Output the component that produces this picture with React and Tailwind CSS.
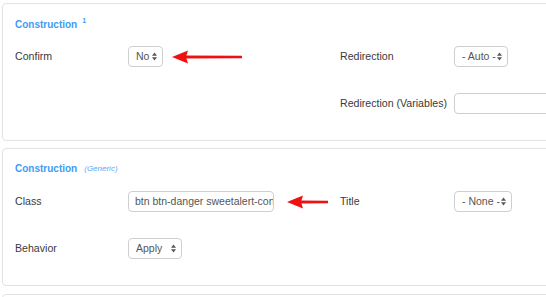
import React from 'react';

function UpDown() {
  return (
    <svg width="5" height="9" viewBox="0 0 5 9" className="shrink-0">
      <path d="M2.5 0.5 L5 3.7 L0 3.7 Z" fill="#555" />
      <path d="M2.5 8.5 L5 5.3 L0 5.3 Z" fill="#555" />
    </svg>
  );
}

function Select({ value, width }) {
  return (
    <div
      className={`h-[21px] flex items-center justify-between pl-[7px] pr-[5px] border border-[#cfcfcf] rounded-[4px] bg-white text-[10.5px] text-[#555] ${width}`}
    >
      <span>{value}</span>
      <UpDown />
    </div>
  );
}

function RedArrow({ length }) {
  return (
    <svg width={length} height="14" viewBox={`0 0 ${length} 14`} className="shrink-0">
      <path d="M0 7 L16 0.5 L14 7 L16 13.5 Z" fill="#ee1111" />
      <path d={`M13 5.4 L${length} 5.8 L${length} 8.2 L13 8.6 Z`} fill="#ee1111" />
    </svg>
  );
}

function Label({ children }) {
  return <div className="text-[10.6px] text-[#3a3a3a]">{children}</div>;
}

export default function App() {
  return (
    <div
      className="w-[546px] h-[297px] overflow-hidden bg-white"
      style={{ fontFamily: '"Liberation Sans", Arial, sans-serif' }}
    >
      <div className="w-[700px] pl-[2px] pt-[3px]">
        <div className="h-[138px] border border-[#e2e2e2] rounded-[4px] pl-[12px] pt-[14px]">
          <div className="h-[13px] flex items-start text-[10px] leading-[13px] font-bold text-[#3e9cf4]">
            Construction
            <span className="ml-[5px] text-[7px] leading-[8px] -mt-[1px]">1</span>
          </div>
          <div className="mt-[15px] grid grid-cols-[113px_212px_114px_1fr] gap-y-[26px] items-center">
            <Label>Confirm</Label>
            <div className="flex items-center">
              <Select value="No" width="w-[35px]" />
              <div className="ml-[9px]">
                <RedArrow length={70} />
              </div>
            </div>
            <Label>Redirection</Label>
            <Select value="- Auto -" width="w-[54px]" />

            <div />
            <div />
            <Label>Redirection (Variables)</Label>
            <div className="h-[21px] w-[160px] border border-[#cfcfcf] rounded-[4px] bg-white" />
          </div>
        </div>

        <div className="mt-[7px] h-[138px] border border-[#e2e2e2] rounded-[4px] pl-[12px] pt-[13px]">
          <div className="h-[13px] flex items-center text-[10px] leading-[13px] font-bold text-[#3e9cf4]">
            Construction
            <span className="ml-[7px] text-[8px] font-normal italic text-[#5aaaf5]">(Generic)</span>
          </div>
          <div className="mt-[16px] grid grid-cols-[113px_212px_114px_1fr] gap-y-[26px] items-center">
            <Label>Class</Label>
            <div className="flex items-center">
              <div className="h-[21px] w-[146px] overflow-hidden whitespace-nowrap flex items-center pl-[6px] border border-[#cfcfcf] rounded-[4px] bg-white text-[10.5px] text-[#555]">
                btn btn-danger sweetalert-confirm
              </div>
              <div className="ml-[13px]">
                <RedArrow length={41} />
              </div>
            </div>
            <Label>Title</Label>
            <Select value="- None -" width="w-[58px]" />

            <Label>Behavior</Label>
            <Select value="Apply" width="w-[54px]" />
            <div />
            <div />
          </div>
        </div>

        <div className="mt-[8px] h-[40px] border border-[#e2e2e2] rounded-[4px]" />
      </div>
    </div>
  );
}
